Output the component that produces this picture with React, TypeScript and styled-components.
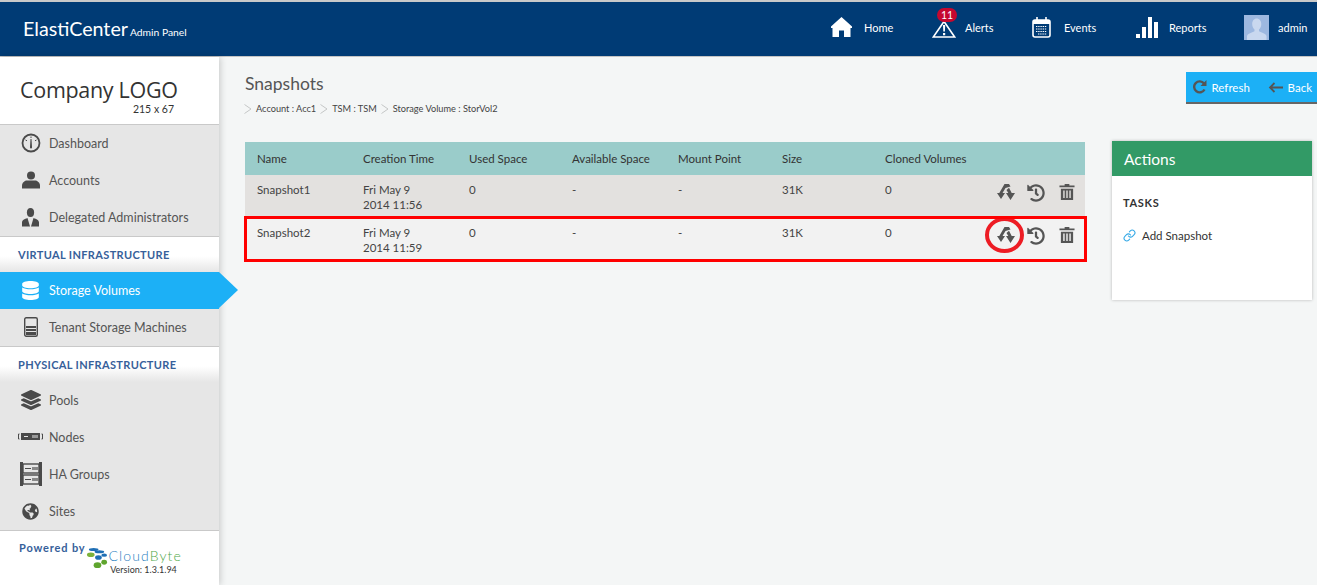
import React from 'react';
import styled, {createGlobalStyle} from 'styled-components';
import {FaDatabase, FaGlobeAmericas, FaHistory, FaLayerGroup} from 'react-icons/fa';
import {Link} from 'lucide-react';

const FONT = `Lato, "Noto Sans", "Liberation Sans", sans-serif`;

const GlobalStyle = createGlobalStyle`
  html, body {
    margin: 0;
    padding: 0;
    height: 585px;
    overflow: hidden;
    background: #f4f6f6;
    font-family: ${FONT};
  }
  * {
    box-sizing: border-box;
  }
`;

type Snapshot = {
    name: string;
    day: string;
    time: string;
    used: string;
    available: string;
    mount: string;
    size: string;
    cloned: string;
};

const snapshots: Snapshot[] = [
    {name: 'Snapshot1', day: 'Fri May 9', time: '2014 11:56', used: '0', available: '-', mount: '-', size: '31K', cloned: '0'},
    {name: 'Snapshot2', day: 'Fri May 9', time: '2014 11:59', used: '0', available: '-', mount: '-', size: '31K', cloned: '0'},
];

const HomeIcon = () => (
    <svg width="21" height="20" viewBox="0 0 21 20">
        <path fill="#fff" d="M10.5 0 21 9.5V11h-1.5v9H13v-6.5H8V20H1.500v-9H0V9.500z"/>
    </svg>
);

const AlertIcon = () => (
    <svg width="24" height="18" viewBox="0 0 24 18">
        <path fill="none" stroke="#fff" strokeWidth="1.6" d="M12 1.500 1.300 17h21.400z"/>
        <path fill="#fff" d="M11 5h2.200l-.3 6.500h-1.600zM11 13h2.200v2.300H11z"/>
    </svg>
);

const CalendarIcon = () => (
    <svg width="19" height="21" viewBox="0 0 19 21">
        <rect x="1" y="3" width="17" height="17" rx="2" fill="none" stroke="#fff" strokeWidth="1.600"/>
        <rect x="1" y="3" width="17" height="4" fill="#fff"/>
        <path stroke="#fff" strokeWidth="1.600" d="M5 0v5M14 0v5"/>
        <path stroke="#fff" strokeWidth="1.200" strokeDasharray="1.400 .8" d="M4 9.500h11M4 12h11M4 14.500h11M6 17h9"/>
    </svg>
);

const BarsIcon = () => (
    <svg width="22" height="21" viewBox="0 0 22 21">
        <path fill="#fff" d="M0 17h4v4H0zM6 10h4v11H6zM12 0h4v21h-4zM18 5h4v16h-4z"/>
    </svg>
);

const AvatarIcon = () => (
    <svg width="25" height="25" viewBox="0 0 25 25">
        <rect width="25" height="25" fill="#9db8e0"/>
        <path fill="#c9d8ef" d="M12.500 3.500c3 0 4.800 2.400 4.800 5.500 0 2.400-1 4.400-2.300 5.500v1.800c2.800 1.200 6.500 2.300 7.500 4.700v4.500H3V21c1-2.400 4.700-3.500 7.500-4.700v-1.800C9.200 13.400 8.200 11.400 8.200 9c0-3.100 1.800-5.500 4.300-5.500z"/>
    </svg>
);

const GaugeIcon = () => (
    <svg width="20" height="20" viewBox="0 0 20 20">
        <circle cx="10" cy="10" r="8.500" fill="#e6e6e6" stroke="#4a4a4a" strokeWidth="1.800"/>
        <path fill="#4a4a4a" d="M9.500 6h1l.5 8.500a1 1 0 1 1-2 0z"/>
        <path stroke="#4a4a4a" d="M4.500 7l1.500.8M15.500 7l-1.500.8M10 3.500v1.500"/>
    </svg>
);

const PersonIcon = () => (
    <svg width="18" height="18" viewBox="0 0 18 18">
        <circle cx="9" cy="4.500" r="4" fill="#4a4a4a"/>
        <path fill="#4a4a4a" d="M0 17.500v-3C0 11.500 3 9.500 5 9.500h8c2 0 5 2 5 5v3z"/>
    </svg>
);

const SuitIcon = () => (
    <svg width="17" height="19" viewBox="0 0 17 19">
        <ellipse cx="8.500" cy="4.500" rx="3.600" ry="4.500" fill="#4a4a4a"/>
        <path fill="#4a4a4a" d="M0 18.500v-4c0-2.500 2.500-3.500 5.500-4.500L8 18.500h1L11.500 10c3 1 5.500 2 5.500 4.500v4z"/>
    </svg>
);

const TenantIcon = () => (
    <svg width="14" height="20" viewBox="0 0 14 20">
        <rect x=".7" y=".7" width="12.600" height="18.600" rx="1.500" fill="#e6e6e6" stroke="#4a4a4a" strokeWidth="1.400"/>
        <path fill="#4a4a4a" d="M2 9h10v2H2zM2 12h10v2H2zM2 15h10v3H2z"/>
    </svg>
);

const NodeIcon = () => (
    <svg width="25" height="8" viewBox="0 0 25 8">
        <rect x="3" y="0" width="19" height="7" fill="#4a4a4a"/>
        <path stroke="#e6e6e6" d="M6 3.500h4M15 2v3M17 2v3M19 2v3"/>
        <path fill="none" stroke="#4a4a4a" d="M1.500 1H.5v5h1M23.500 1h1v5h-1"/>
    </svg>
);

const RackIcon = () => (
    <svg width="22" height="24" viewBox="0 0 22 24">
        <path fill="#4a4a4a" d="M0 0h3v24H0zM19 0h3v24h-3z"/>
        <rect x="3" y="2" width="16" height="9" fill="#e6e6e6" stroke="#4a4a4a" strokeWidth="1.400"/>
        <rect x="3" y="13" width="16" height="9" fill="#e6e6e6" stroke="#4a4a4a" strokeWidth="1.400"/>
        <path stroke="#4a4a4a" strokeWidth="1.200" d="M5 6.500h6M5 17.500h6M13 5v3M15 5v3M17 5v3M13 16v3M15 16v3M17 16v3"/>
    </svg>
);

const CloneIcon = () => (
    <svg width="18" height="17" viewBox="0 0 18 17">
        <path fill="#555" d="M7.500 0H12l1.500 2.500-5 1.500-3 5H8L4 15 0 9h2.300z"/>
        <path fill="#555" d="M9.500 6 12 3.800 14.700 9H18l-4.500 7L9 9h2.300z"/>
    </svg>
);

const TrashIcon = () => (
    <svg width="16" height="16" viewBox="0 0 16 17">
        <path fill="#555" d="M5.500 0h5v1.500H16v2H0v-2h5.500zM1.500 5h13v12h-13zM4 7v8h1.500V7zM7.250 7v8h1.500V7zM10.500 7v8H12V7z" fillRule="evenodd"/>
    </svg>
);

const RefreshIcon = () => (
    <svg width="14" height="14" viewBox="0 0 14 14">
        <path fill="none" stroke="#555" strokeWidth="2.400" d="M11.500 9.500A5.500 5.500 0 1 1 11 3.500"/>
        <path fill="#555" d="M13.500 0v6h-6z"/>
    </svg>
);

const BackIcon = () => (
    <svg width="15" height="11" viewBox="0 0 15 11">
        <path fill="none" stroke="#555" strokeWidth="1.800" d="M15 5.500H2M6.500 1 2 5.500 6.500 10"/>
    </svg>
);

const CrumbArrow = () => (
    <svg width="8" height="10" viewBox="0 0 8 10">
        <path fill="none" stroke="#c4c6c6" d="M.500.500 7 5 .500 9.500"/>
    </svg>
);

const CloudByteMark = () => (
    <svg width="22" height="23" viewBox="0 0 23 24">
        <ellipse cx="8" cy="2.500" rx="5" ry="1.600" fill="#1f6fb5"/>
        <ellipse cx="14" cy="5" rx="5" ry="1.600" fill="#1f6fb5"/>
        <ellipse cx="5" cy="8" rx="4" ry="2.400" fill="#7cb23a"/>
        <ellipse cx="13" cy="11" rx="3.500" ry="2.400" fill="#1f6fb5"/>
        <ellipse cx="19" cy="8.500" rx="3" ry="1.800" fill="#1f6fb5"/>
        <ellipse cx="12" cy="19" rx="4" ry="3" fill="#5fa52e"/>
        <ellipse cx="19" cy="16" rx="3" ry="2.600" fill="#5fa52e"/>
    </svg>
);

export default function App() {
    return (
        <Page>
            <GlobalStyle/>
            <Header>
                <Brand>ElastiCenter<small>Admin Panel</small></Brand>
                <TopNav>
                    <TopItem $width={101} $gap={12}><HomeIcon/><span>Home</span></TopItem>
                    <TopItem $width={100} $gap={9}>
                        <AlertWrap><AlertIcon/><Badge>11</Badge></AlertWrap>
                        <span>Alerts</span>
                    </TopItem>
                    <TopItem $width={104} $gap={13}><CalendarIcon/><span>Events</span></TopItem>
                    <TopItem $width={108} $gap={11}><BarsIcon/><span>Reports</span></TopItem>
                    <TopItem $width={73} $gap={9}><AvatarIcon/><span>admin</span></TopItem>
                </TopNav>
            </Header>
            <Body>
                <Sidebar>
                    <LogoBox>
                        <LogoName>Company LOGO</LogoName>
                        <LogoSize>215 x 67</LogoSize>
                    </LogoBox>
                    <NavGroup>
                        <NavItem><NavIcon><GaugeIcon/></NavIcon>Dashboard</NavItem>
                        <NavItem><NavIcon><PersonIcon/></NavIcon>Accounts</NavItem>
                        <NavItem><NavIcon><SuitIcon/></NavIcon>Delegated Administrators</NavItem>
                    </NavGroup>
                    <SectionTitle>VIRTUAL INFRASTRUCTURE</SectionTitle>
                    <NavGroup>
                        <NavItem $active><NavIcon><FaDatabase size={19} color="#fff"/></NavIcon>Storage Volumes</NavItem>
                        <NavItem><NavIcon><TenantIcon/></NavIcon>Tenant Storage Machines</NavItem>
                    </NavGroup>
                    <SectionTitle>PHYSICAL INFRASTRUCTURE</SectionTitle>
                    <NavGroup>
                        <NavItem><NavIcon><FaLayerGroup size={20} color="#4a4a4a"/></NavIcon>Pools</NavItem>
                        <NavItem><NavIcon><NodeIcon/></NavIcon>Nodes</NavItem>
                        <NavItem><NavIcon><RackIcon/></NavIcon>HA Groups</NavItem>
                        <NavItem><NavIcon><FaGlobeAmericas size={17} color="#4a4a4a"/></NavIcon>Sites</NavItem>
                    </NavGroup>
                    <PoweredBox>
                        <PoweredBy>Powered by</PoweredBy>
                        <Vendor>
                            <CloudByteMark/>
                            <VendorText>
                                <VendorName>Cloud<em>Byte</em></VendorName>
                                <VendorVersion>Version: 1.3.1.94</VendorVersion>
                            </VendorText>
                        </Vendor>
                    </PoweredBox>
                </Sidebar>
                <Content>
                    <TitleBar>
                        <div>
                            <Title>Snapshots</Title>
                            <Breadcrumb>
                                <CrumbArrow/><span>Account : Acc1</span>
                                <CrumbArrow/><span>TSM : TSM</span>
                                <CrumbArrow/><span>Storage Volume : StorVol2</span>
                            </Breadcrumb>
                        </div>
                        <ToolBar>
                            <ToolButton><RefreshIcon/>Refresh</ToolButton>
                            <ToolButton><BackIcon/>Back</ToolButton>
                        </ToolBar>
                    </TitleBar>
                    <Columns>
                        <Table>
                            <HeadRow>
                                <span>Name</span>
                                <span>Creation Time</span>
                                <span>Used Space</span>
                                <span>Available Space</span>
                                <span>Mount Point</span>
                                <span>Size</span>
                                <span>Cloned Volumes</span>
                            </HeadRow>
                            {snapshots.map((s, i) => (
                                <DataRow key={s.name} $even={i % 2 === 1}>
                                    <span>{s.name}</span>
                                    <span>{s.day}<br/>{s.time}</span>
                                    <span>{s.used}</span>
                                    <span>{s.available}</span>
                                    <span>{s.mount}</span>
                                    <span>{s.size}</span>
                                    <span>{s.cloned}</span>
                                    <RowIcons>
                                        <CloneSlot>
                                            <CloneIcon/>
                                            {i === 1 && <RedCircle/>}
                                        </CloneSlot>
                                        <FaHistory size={18} color="#555"/>
                                        <TrashSlot><TrashIcon/></TrashSlot>
                                    </RowIcons>
                                    {i === 1 && <RedFrame/>}
                                </DataRow>
                            ))}
                        </Table>
                        <ActionsPanel>
                            <ActionsHead>Actions</ActionsHead>
                            <ActionsBody>
                                <TasksTitle>TASKS</TasksTitle>
                                <TaskLink><Link size={13} color="#35a9e6"/>Add Snapshot</TaskLink>
                            </ActionsBody>
                        </ActionsPanel>
                    </Columns>
                </Content>
            </Body>
        </Page>
    );
}

const Page = styled.div`
  width: 1317px;
  height: 585px;
  display: flex;
  flex-direction: column;
  overflow: hidden;
  background: #f4f6f6;
`;

const Header = styled.header`
  flex: none;
  height: 57px;
  display: flex;
  align-items: center;
  justify-content: space-between;
  padding: 0 0 0 23px;
  background: #003b75;
  border-top: 2px solid #c9c9c9;
  border-bottom: 1px solid #c4c4c4;
  color: #fff;
`;

const Brand = styled.div`
  font-size: 19.700px;
  line-height: 24px;
  padding-top: 3px;
  small {
    font-size: 10.300px;
    margin-left: 2px;
  }
`;

const TopNav = styled.nav`
  display: flex;
  align-items: center;
  padding-bottom: 4px;
`;

const TopItem = styled.div<{$width: number; $gap: number}>`
  width: ${p => p.$width}px;
  display: flex;
  align-items: center;
  gap: ${p => p.$gap}px;
  font-size: 11px;
`;

const AlertWrap = styled.div`
  position: relative;
  height: 18px;
  margin-top: 3px;
`;

const Badge = styled.div`
  position: absolute;
  left: 5px;
  top: -12px;
  width: 20px;
  height: 14px;
  border-radius: 8px;
  background: #c5082f;
  font-size: 10.500px;
  line-height: 14px;
  text-align: center;
`;

const Body = styled.div`
  flex: 1;
  display: flex;
  min-height: 0;
`;

const Sidebar = styled.aside`
  flex: none;
  width: 219px;
  display: flex;
  flex-direction: column;
  background: #e6e6e6;
  box-shadow: 1px 0 7px rgba(0, 0, 0, 0.2);
  position: relative;
  z-index: 1;
`;

const LogoBox = styled.div`
  height: 68px;
  display: flex;
  flex-direction: column;
  padding: 18px 45px 0 20px;
  background: #fff;
  border-bottom: 1px solid #c9c9c9;
  color: #333;
`;

const LogoName = styled.div`
  font-family: "Open Sans", sans-serif;
  font-size: 21.500px;
  letter-spacing: -0.3px;
  line-height: 29px;
  white-space: nowrap;
`;

const LogoSize = styled.div`
  font-size: 10.500px;
  line-height: 11px;
  text-align: right;
`;

const NavGroup = styled.div`
  display: flex;
  flex-direction: column;
`;

const NavItem = styled.div<{$active?: boolean}>`
  position: relative;
  height: 37px;
  display: flex;
  align-items: center;
  padding-bottom: 1px;
  font-size: 12.500px;
  color: ${p => (p.$active ? '#fff' : '#555')};
  background: ${p => (p.$active ? '#1cb0f6' : 'transparent')};
  ${p => p.$active && `
    &::after {
      content: '';
      position: absolute;
      left: 100%;
      top: 0;
      border-left: 19px solid #1cb0f6;
      border-top: 18.500px solid transparent;
      border-bottom: 18.500px solid transparent;
    }
  `}
`;

const NavIcon = styled.div`
  flex: none;
  width: 49px;
  padding-left: 18px;
  padding-right: 6px;
  display: flex;
  align-items: center;
  justify-content: center;
`;

const SectionTitle = styled.div`
  height: 36px;
  display: flex;
  align-items: center;
  padding-left: 18px;
  font-size: 11px;
  font-weight: 700;
  letter-spacing: 0.35px;
  color: #36609a;
  background: linear-gradient(#fff 55%, #e6e6e6);
  border-top: 1px solid #c9c9c9;
`;

const PoweredBox = styled.div`
  flex: 1;
  display: flex;
  align-items: flex-start;
  padding: 10px 0 0 19px;
  background: #fff;
  border-top: 1px solid #c9c9c9;
`;

const PoweredBy = styled.div`
  font-size: 11px;
  font-weight: 700;
  letter-spacing: 0.85px;
  color: #36609a;
  white-space: nowrap;
`;

const Vendor = styled.div`
  display: flex;
  align-items: flex-start;
  gap: 1px;
  margin: 6px 0 0 0;
`;

const VendorText = styled.div`
  display: flex;
  flex-direction: column;
  align-items: flex-end;
`;

const VendorName = styled.div`
  font-size: 14px;
  font-weight: 300;
  line-height: 12px;
  margin-top: 3px;
  letter-spacing: 1.1px;
  color: #2a7fc0;
  em {
    font-style: normal;
    color: #4fa84a;
  }
`;

const VendorVersion = styled.div`
  font-size: 9px;
  line-height: 10px;
  margin-top: 3px;
  padding-right: 5px;
  color: #333;
`;

const Content = styled.main`
  flex: 1;
  min-width: 0;
  padding: 15px 0 0 26px;
`;

const TitleBar = styled.div`
  display: flex;
  justify-content: space-between;
  align-items: flex-start;
`;

const Title = styled.h1`
  margin: 0;
  font-size: 17.500px;
  line-height: 24px;
  font-weight: 400;
  color: #555;
`;

const Breadcrumb = styled.div`
  display: flex;
  align-items: center;
  gap: 4px;
  margin-top: 6px;
  margin-left: -1px;
  font-size: 9.200px;
  line-height: 14px;
  color: #444;
`;

const ToolBar = styled.div`
  width: 131px;
  height: 32px;
  display: flex;
  align-items: center;
  justify-content: space-between;
  padding: 0 5px 0 7px;
  background: #1cb0f6;
  border-bottom: 2px solid #666;
`;

const ToolButton = styled.div`
  display: flex;
  align-items: center;
  gap: 4.500px;
  font-size: 11.500px;
  color: #fff;
`;

const Columns = styled.div`
  display: flex;
  align-items: flex-start;
  gap: 27px;
  margin-top: 25px;
`;

const Table = styled.div`
  width: 840px;
  margin-top: 1px;
`;

const rowGrid = `
  display: grid;
  grid-template-columns: 106px 106px 103px 106px 104px 103px 1fr;
  padding-left: 12px;
  font-size: 11.500px;
`;

const HeadRow = styled.div`
  ${rowGrid}
  height: 33px;
  align-items: center;
  background: #9accca;
  color: #333;
`;

const DataRow = styled.div<{$even: boolean}>`
  ${rowGrid}
  position: relative;
  height: 43px;
  padding-top: 7px;
  line-height: 15px;
  color: #444;
  background: ${p => (p.$even ? '#f2f2f2' : '#e3e1df')};
`;

const RowIcons = styled.div`
  position: absolute;
  right: 10px;
  top: 9px;
  display: flex;
  align-items: flex-start;
  gap: 12px;
`;

const CloneSlot = styled.div`
  position: relative;
  display: flex;
`;

const TrashSlot = styled.div`
  display: flex;
  margin-left: 2px;
`;

const RedCircle = styled.div`
  position: absolute;
  left: -12px;
  top: -10px;
  width: 39px;
  height: 36px;
  border: 4px solid #ed1c24;
  border-radius: 50%;
`;

const RedFrame = styled.div`
  position: absolute;
  left: -1px;
  right: -2px;
  top: -2px;
  bottom: -1px;
  border: 3px solid #f00;
  pointer-events: none;
`;

const ActionsPanel = styled.section`
  width: 200px;
  height: 159px;
  display: flex;
  flex-direction: column;
  background: #fff;
  box-shadow: 0 0 3px rgba(0, 0, 0, 0.25);
`;

const ActionsHead = styled.div`
  height: 35px;
  display: flex;
  align-items: center;
  padding-left: 12px;
  background: #329a66;
  color: #fff;
  font-size: 15.500px;
`;

const ActionsBody = styled.div`
  padding: 20px 11px 0;
`;

const TasksTitle = styled.div`
  font-size: 11px;
  font-weight: 700;
  letter-spacing: 0.7px;
  color: #333;
`;

const TaskLink = styled.div`
  display: flex;
  align-items: center;
  gap: 6px;
  margin-top: 20px;
  font-size: 11.500px;
  color: #333;
`;
